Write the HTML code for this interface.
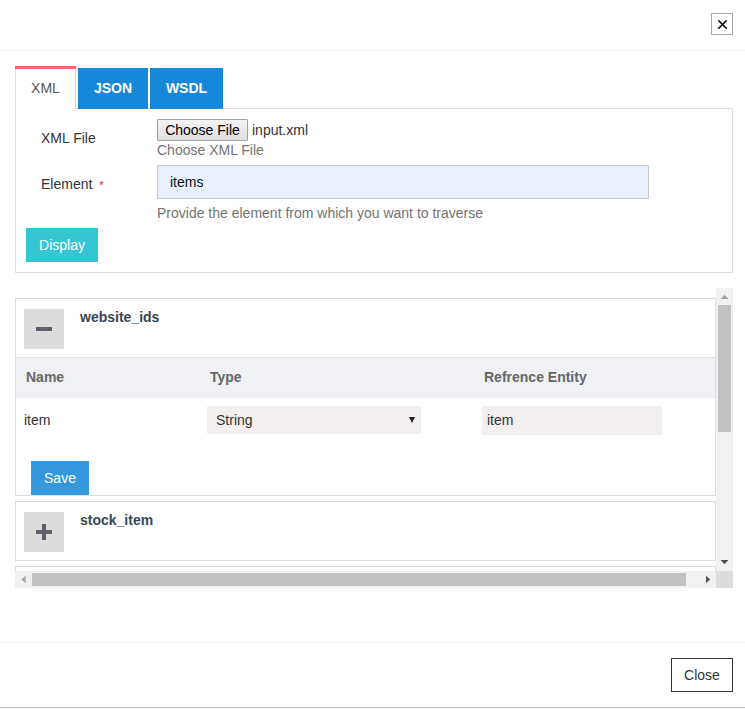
<!DOCTYPE html>
<html><head><meta charset="utf-8">
<style>
*{box-sizing:border-box;margin:0;padding:0}
html,body{width:745px;height:709px;overflow:hidden;background:#fff}
body{font-family:"Liberation Sans",sans-serif;font-size:14px;color:#333;position:relative}
.abs{position:absolute}
.hdr-line{left:0;top:50px;width:745px;height:1px;background:#efefef}
.xbtn{left:711px;top:13px;width:22px;height:22px;border:1px solid #a0aab3;background:#fff}
.tab-xml{left:15px;top:66px;width:61px;height:43px;border-top:3px solid transparent;border-left:1px solid #ddd;border-right:1px solid #ddd;background:#fff;text-align:center;color:#555;font-size:14px;line-height:38px}
.tab{top:68px;height:41px;background:#1788d8;color:#fff;font-weight:bold;text-align:center;line-height:40px;font-size:14px}
.panel{left:15px;top:108px;width:718px;height:165px;border:1px solid #ddd}
.lbl{color:#333;font-size:14px}
.help{color:#737373;font-size:14px}
.cf{left:157px;top:119px;width:91px;height:22px;border:1px solid #a2a2a2;border-radius:1px;background:linear-gradient(#f4f4f4,#dfdfdf);font-size:14px;color:#000;line-height:21px;text-align:center}
.inp{left:157px;top:165px;width:492px;height:34px;background:#e8f0fe;border:1px solid #c2cad8;padding-left:12px;line-height:32px;color:#111;font-size:14px}
.btn-display{left:26px;top:228px;width:72px;height:34px;background:#36c6d3;color:#fff;font-size:14px;line-height:34px;text-align:center}
.minus{width:40px;height:40px;background:#dcdcdc}
.ttl{font-weight:bold;color:#374757;font-size:14px;margin-top:1px}
.th{font-weight:bold;color:#666;font-size:14px}
.sel{background:#f3efef;color:#333}
.arr{width:0;height:0;border-left:3px solid transparent;border-right:3px solid transparent;border-top:6px solid #222}
.btn-save{left:31px;top:461px;width:58px;height:34px;background:#3598dc;color:#fff;text-align:center;line-height:34px}
</style></head>
<body>
<div class="abs hdr-line"></div>
<div class="abs xbtn"></div><svg class="abs" style="left:711px;top:13px" width="22" height="22"><path d="M7.8 7.8L15.2 15.2M15.2 7.8L7.8 15.2" stroke="#000" stroke-width="1.6" stroke-linecap="round" fill="none"/></svg>

<div class="abs panel"></div>
<div class="abs tab-xml">XML</div><div class="abs" style="left:15px;top:66px;width:61px;height:3px;background:#ec6670"></div>
<div class="abs tab" style="left:78px;width:70px">JSON</div>
<div class="abs tab" style="left:150px;width:73px">WSDL</div>

<div class="abs lbl" style="left:41px;top:130px">XML File</div>
<div class="abs cf">Choose File</div>
<div class="abs" style="left:252px;top:122px;color:#333">input.xml</div>
<div class="abs help" style="left:157px;top:142px">Choose XML File</div>
<div class="abs lbl" style="left:41px;top:176px">Element <span style="color:#e02222;margin-left:3px;font-size:11px">*</span></div>
<div class="abs inp">items</div>
<div class="abs help" style="left:157px;top:205px">Provide the element from which you want to traverse</div>
<div class="abs btn-display">Display</div>

<!-- scroll area -->
<div class="abs" style="left:15px;top:298px;width:701px;height:198px;border:1px solid #e7ecf1;border-color:#ddd"></div>
<div class="abs minus" style="left:24px;top:309px"><div class="abs" style="left:12px;top:18px;width:16px;height:4px;background:#5e616a"></div></div>
<div class="abs ttl" style="left:80px;top:308px">website_ids</div>
<div class="abs" style="left:16px;top:357px;width:699px;height:41px;background:#eff1f5;border-top:1px solid #e0e0e0;border-bottom:1px solid #e8edf0"></div>
<div class="abs th" style="left:26px;top:369px">Name</div>
<div class="abs th" style="left:210px;top:369px">Type</div>
<div class="abs th" style="left:484px;top:369px">Refrence Entity</div>
<div class="abs" style="left:24px;top:412px;color:#333">item</div>
<div class="abs sel" style="left:207px;top:406px;width:214px;height:28px"><span class="abs" style="left:9px;top:6px">String</span><span class="abs arr" style="left:202px;top:11px"></span></div>
<div class="abs sel" style="left:482px;top:406px;width:180px;height:29px"><span class="abs" style="left:5px;top:6px">item</span></div>
<div class="abs btn-save">Save</div>

<div class="abs" style="left:15px;top:501px;width:701px;height:60px;border:1px solid #ddd"></div>
<div class="abs minus" style="left:24px;top:512px"><div class="abs" style="left:12px;top:18px;width:16px;height:4px;background:#5e616a"></div><div class="abs" style="left:18px;top:12px;width:4px;height:16px;background:#5e616a"></div></div>
<div class="abs ttl" style="left:80px;top:511px">stock_item</div>
<div class="abs" style="left:15px;top:566px;width:701px;height:10px;border:1px solid #ddd;border-bottom:none"></div>

<!-- scrollbars -->
<div class="abs" style="left:716px;top:288px;width:17px;height:283px;background:#f1f1f1"></div>
<div class="abs" style="left:718px;top:305px;width:13px;height:127px;background:#c1c1c1"></div>


<div class="abs" style="left:15px;top:571px;width:701px;height:17px;background:#f1f1f1"></div>
<div class="abs" style="left:32px;top:573px;width:654px;height:13px;background:#c1c1c1"></div>


<div class="abs" style="left:716px;top:571px;width:17px;height:17px;background:#dcdcdc"></div>

<svg class="abs" style="left:0;top:0" width="745" height="709">
<polygon points="720.6,299 728.4,299 724.5,294.8" fill="#a3a3a3"/>
<polygon points="720.6,560 728.4,560 724.5,564.2" fill="#505050"/>
<polygon points="25.6,575.8 25.6,583.2 21.4,579.5" fill="#a3a3a3"/>
<polygon points="706,575.8 706,583.2 710.2,579.5" fill="#505050"/>
</svg>
<!-- footer -->
<div class="abs" style="left:0;top:642px;width:745px;height:1px;background:#efefef"></div>
<div class="abs" style="left:671px;top:658px;width:62px;height:34px;border:1px solid #2f353b;color:#2f353b;text-align:center;line-height:32px">Close</div>
<div class="abs" style="left:0;top:707px;width:745px;height:1px;background:#bbb"></div>

</body></html>
